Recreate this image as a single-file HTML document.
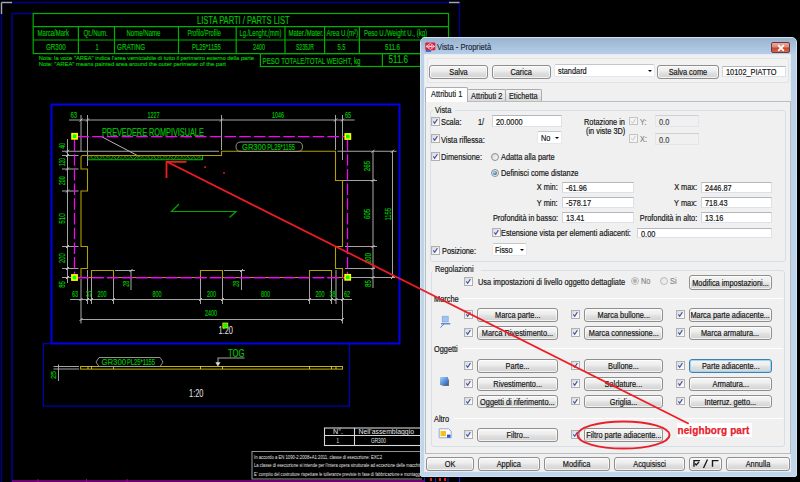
<!DOCTYPE html><html><head><meta charset="utf-8"><style>
*{margin:0;padding:0}
html,body{width:800px;height:482px;overflow:hidden;background:#000}
body{position:relative;font-family:"Liberation Sans",sans-serif;font-size:8.4px;color:#1a1a1a}
#cad{position:absolute;left:0;top:0}
#ovl{position:absolute;left:0;top:0}
.win{position:absolute;left:419.5px;top:36.5px;width:377px;height:440px;box-sizing:border-box;border:1px solid #d4e2ef;border-radius:5px 5px 2px 2px;
 background:linear-gradient(#b9d0e8,#bcd3ea 30%,#c0d6ec)}
.client{position:absolute;left:424px;top:54px;width:367px;height:418px;background:#f0f0f0;box-sizing:border-box;border:1px solid #e4ebf1}
.btn,.fld,.lbl,.cb,.rd,.tab,.grp,.sep,.panel,.tabpage{position:absolute;box-sizing:border-box;white-space:nowrap}
.btn{display:flex;justify-content:center;border:1px solid #8e8e8e;border-radius:3px;background:linear-gradient(#f6f6f6 0%,#ededed 42%,#e0e0e0 58%,#d2d2d2 100%);box-shadow:inset 0 0 0 1px rgba(255,255,255,.7);text-align:center;color:#141414}
.btn.focus{border-color:#3c7fb1;box-shadow:inset 0 0 0 1px #9fd5f5}
.fld{padding-top:1px;background:#fff;border:1px solid #dde2e8;border-top-color:#b4b8be;border-left-color:#d0d4da;padding-left:2.5px;color:#141414}
.fld.dis{background:#f0f0f0;border-color:#e2e5e9;border-top-color:#cdd0d4;color:#444}
.cmb{border-color:#e4e7eb;border-top-color:#c4c8cd;border-radius:2px}
.cmb .arr{position:absolute;right:2px;top:50%;margin-top:-1px;border-left:2.3px solid transparent;border-right:2.3px solid transparent;border-top:2.6px solid #000}
.lbl{height:12px;line-height:12px;color:#141414}
.t{display:inline-block;transform:scaleX(0.88);-webkit-text-stroke:.18px currentColor}
.cb{width:8.5px;height:8.5px;border:1px solid #b0b0b0;background:linear-gradient(135deg,#d8d8d8,#f6f6f6 70%,#fff)}
.cb svg{position:absolute;left:0;top:0}
.cb.dis{border-color:#c4c4c4;background:#f4f4f4}
.rd{width:8px;height:8px;border:1px solid #8e8f8f;border-radius:50%;background:linear-gradient(135deg,#d6d6d6,#fafafa)}
.rdot{position:absolute;left:1px;top:1px;width:4px;height:4px;border-radius:50%;background:radial-gradient(circle at 40% 35%,#a6e0ff,#1f6ea6 70%,#164a7a)}
.grp{border:1px solid #d5dfe5;border-radius:3px}
.glbl{position:absolute;background:#f0f0f0;padding:0 2px;height:12px;line-height:12px}
.sep{height:1px;background:#d5dfe5;border-bottom:1px solid #fff}
.panel{border:1px solid #e3e3e3;border-radius:2px;background:#f2f2f2}
.tabpage{border:1px solid #b9bcc0;background:#f0f0f0}
.tab{border:1px solid #a9adb3;border-bottom:none;background:linear-gradient(#f4f4f4,#e8e8e8 50%,#dadada);text-align:center;border-radius:2px 2px 0 0}
.tab.act{background:#fff;z-index:2}
</style></head><body>
<svg id="cad" width="800" height="482" viewBox="0 0 800 482" font-family="Liberation Sans, sans-serif"><line x1="1.5" y1="2.5" x2="459.5" y2="2.5" stroke="#000090" stroke-width="1.4"/><line x1="1.5" y1="2.5" x2="1.5" y2="482" stroke="#000090" stroke-width="1.4"/><line x1="459.5" y1="2.5" x2="459.5" y2="482" stroke="#000090" stroke-width="1.4"/><line x1="1.5" y1="2.5" x2="12" y2="2.5" stroke="#a8a8a8" stroke-width="1.4"/><line x1="1.5" y1="2.5" x2="1.5" y2="14" stroke="#a8a8a8" stroke-width="1.4"/><line x1="449" y1="2.5" x2="459.5" y2="2.5" stroke="#a8a8a8" stroke-width="1.4"/><line x1="12" y1="13.5" x2="33" y2="13.5" stroke="#0000a0" stroke-width="1.4"/><line x1="12" y1="13.5" x2="12" y2="482" stroke="#0000a0" stroke-width="1.4"/><line x1="12" y1="481" x2="424" y2="481" stroke="#900090" stroke-width="1.3"/><line x1="38" y1="479" x2="38" y2="482" stroke="#a000a0" stroke-width="1"/><line x1="86.5" y1="479" x2="86.5" y2="482" stroke="#a000a0" stroke-width="1"/><line x1="127" y1="479" x2="127" y2="482" stroke="#a000a0" stroke-width="1"/><rect x="33.2" y="13.5" width="415.3" height="40.1" stroke="#00b000" stroke-width="1.2" fill="none"/><line x1="33.2" y1="26.6" x2="448.5" y2="26.6" stroke="#00b000" stroke-width="1.2"/><line x1="33.2" y1="40" x2="448.5" y2="40" stroke="#00b000" stroke-width="1.2"/><line x1="78.4" y1="26.6" x2="78.4" y2="53.6" stroke="#00b000" stroke-width="1.2"/><line x1="114.5" y1="26.6" x2="114.5" y2="53.6" stroke="#00b000" stroke-width="1.2"/><line x1="178.5" y1="26.6" x2="178.5" y2="53.6" stroke="#00b000" stroke-width="1.2"/><line x1="236.2" y1="26.6" x2="236.2" y2="53.6" stroke="#00b000" stroke-width="1.2"/><line x1="285" y1="26.6" x2="285" y2="53.6" stroke="#00b000" stroke-width="1.2"/><line x1="324.6" y1="26.6" x2="324.6" y2="53.6" stroke="#00b000" stroke-width="1.2"/><line x1="359.4" y1="26.6" x2="359.4" y2="53.6" stroke="#00b000" stroke-width="1.2"/><text x="197" y="24.226" fill="#00c400" stroke="#00c400" stroke-width="0.18" font-size="11.18" textLength="92.60000000000002" lengthAdjust="spacingAndGlyphs" font-weight="normal" >LISTA PARTI / PARTS LIST</text><text x="37.4" y="36.372" fill="#00c400" stroke="#00c400" stroke-width="0.18" font-size="8.81" textLength="31.6" lengthAdjust="spacingAndGlyphs" font-weight="normal" >Marca/Mark</text><text x="83.4" y="36.372" fill="#00c400" stroke="#00c400" stroke-width="0.18" font-size="8.81" textLength="24.39999999999999" lengthAdjust="spacingAndGlyphs" font-weight="normal" >Qt./Num.</text><text x="126.5" y="36.372" fill="#00c400" stroke="#00c400" stroke-width="0.18" font-size="8.81" textLength="33.900000000000006" lengthAdjust="spacingAndGlyphs" font-weight="normal" >Nome/Name</text><text x="187.5" y="36.372" fill="#00c400" stroke="#00c400" stroke-width="0.18" font-size="8.81" textLength="33.30000000000001" lengthAdjust="spacingAndGlyphs" font-weight="normal" >Profilo/Profile</text><text x="239.5" y="36.372" fill="#00c400" stroke="#00c400" stroke-width="0.18" font-size="8.81" textLength="42.0" lengthAdjust="spacingAndGlyphs" font-weight="normal" >Lg./Lenght,(mm)</text><text x="288.4" y="36.372" fill="#00c400" stroke="#00c400" stroke-width="0.18" font-size="8.81" textLength="35.10000000000002" lengthAdjust="spacingAndGlyphs" font-weight="normal" >Mater./Mater.</text><text x="326.5" y="36.372" fill="#00c400" stroke="#00c400" stroke-width="0.18" font-size="8.81" textLength="31.5" lengthAdjust="spacingAndGlyphs" font-weight="normal" >Area U.(m²)</text><text x="364" y="36.372" fill="#00c400" stroke="#00c400" stroke-width="0.18" font-size="8.81" textLength="63" lengthAdjust="spacingAndGlyphs" font-weight="normal" >Peso U./Weight U., (kg)</text><text x="46" y="50.193999999999996" fill="#00c400" stroke="#00c400" stroke-width="0.18" font-size="9.15" textLength="19.599999999999994" lengthAdjust="spacingAndGlyphs" font-weight="normal" >GR300</text><text x="95.5" y="50.193999999999996" fill="#00c400" stroke="#00c400" stroke-width="0.18" font-size="9.15" textLength="3.0" lengthAdjust="spacingAndGlyphs" font-weight="normal" >1</text><text x="117" y="50.193999999999996" fill="#00c400" stroke="#00c400" stroke-width="0.18" font-size="9.15" textLength="28.19999999999999" lengthAdjust="spacingAndGlyphs" font-weight="normal" >GRATING</text><text x="192" y="50.193999999999996" fill="#00c400" stroke="#00c400" stroke-width="0.18" font-size="9.15" textLength="28.80000000000001" lengthAdjust="spacingAndGlyphs" font-weight="normal" >PL25*1155</text><text x="253" y="50.193999999999996" fill="#00c400" stroke="#00c400" stroke-width="0.18" font-size="9.15" textLength="12" lengthAdjust="spacingAndGlyphs" font-weight="normal" >2400</text><text x="296" y="50.193999999999996" fill="#00c400" stroke="#00c400" stroke-width="0.18" font-size="9.15" textLength="18" lengthAdjust="spacingAndGlyphs" font-weight="normal" >S235JR</text><text x="337.5" y="50.193999999999996" fill="#00c400" stroke="#00c400" stroke-width="0.18" font-size="9.15" textLength="8.0" lengthAdjust="spacingAndGlyphs" font-weight="normal" >5.5</text><text x="385" y="50.193999999999996" fill="#00c400" stroke="#00c400" stroke-width="0.18" font-size="9.15" textLength="15" lengthAdjust="spacingAndGlyphs" font-weight="normal" >511.6</text><text x="38.8" y="59.696" fill="#00c400" stroke="#00c400" stroke-width="0.18" font-size="6.10" textLength="215.2" lengthAdjust="spacingAndGlyphs" font-weight="normal" >Nota: la voce "AREA" indica l'area verniciabile di tutto il perimetro esterno della parte</text><text x="38.8" y="65.996" fill="#00c400" stroke="#00c400" stroke-width="0.18" font-size="6.10" textLength="187.2" lengthAdjust="spacingAndGlyphs" font-weight="normal" >Note: "AREA" means  painted area  around the outer perimeter of the part</text><rect x="260.4" y="53.6" width="188.10000000000002" height="12.899999999999999" stroke="#00b000" stroke-width="1.2" fill="none"/><line x1="382.4" y1="53.6" x2="382.4" y2="66.5" stroke="#00b000" stroke-width="1.2"/><text x="262.6" y="63.616" fill="#00c400" stroke="#00c400" stroke-width="0.18" font-size="9.49" textLength="97.79999999999995" lengthAdjust="spacingAndGlyphs" font-weight="normal" >PESO TOTALE/TOTAL WEIGHT, kg</text><text x="388.6" y="63.226" fill="#00c400" stroke="#00c400" stroke-width="0.18" font-size="11.18" textLength="19.399999999999977" lengthAdjust="spacingAndGlyphs" font-weight="normal" >511.6</text><rect x="51.5" y="104.5" width="348.0" height="239.0" stroke="#0000f0" stroke-width="2" fill="none"/><path d="M51.5 343.5 L43.4 343.5 L43.4 406.2 L349.5 406.2 L349.5 343.5" stroke="#0000b4" stroke-width="1.25" fill="none" /><line x1="69" y1="120" x2="354.5" y2="120" stroke="#a4a4a4" stroke-width="1.05"/><line x1="81" y1="115" x2="81" y2="152" stroke="#a4a4a4" stroke-width="1.05"/><line x1="87.5" y1="115" x2="87.5" y2="166" stroke="#a4a4a4" stroke-width="1.05"/><line x1="221.5" y1="115" x2="221.5" y2="150" stroke="#a4a4a4" stroke-width="1.05"/><line x1="335.5" y1="115" x2="335.5" y2="150" stroke="#a4a4a4" stroke-width="1.05"/><line x1="342.5" y1="115" x2="342.5" y2="160" stroke="#a4a4a4" stroke-width="1.05"/><line x1="62" y1="151.25" x2="219" y2="151.25" stroke="#a4a4a4" stroke-width="1.05"/><line x1="337.5" y1="151.25" x2="396.5" y2="151.25" stroke="#a4a4a4" stroke-width="1.05"/><line x1="62" y1="155.5" x2="78.5" y2="155.5" stroke="#a4a4a4" stroke-width="1.05"/><line x1="62" y1="169" x2="78.5" y2="169" stroke="#a4a4a4" stroke-width="1.05"/><line x1="62" y1="191" x2="78.5" y2="191" stroke="#a4a4a4" stroke-width="1.05"/><line x1="62" y1="246.5" x2="78.5" y2="246.5" stroke="#a4a4a4" stroke-width="1.05"/><line x1="62" y1="268.5" x2="78.5" y2="268.5" stroke="#a4a4a4" stroke-width="1.05"/><line x1="62" y1="277.5" x2="71" y2="277.5" stroke="#a4a4a4" stroke-width="1.05"/><line x1="67.5" y1="139" x2="67.5" y2="283" stroke="#a4a4a4" stroke-width="1.05"/><line x1="373" y1="151.25" x2="373" y2="288" stroke="#a4a4a4" stroke-width="1.05"/><line x1="392.5" y1="151.25" x2="392.5" y2="277.5" stroke="#a4a4a4" stroke-width="1.05"/><line x1="342.5" y1="180.5" x2="377" y2="180.5" stroke="#a4a4a4" stroke-width="1.05"/><line x1="345" y1="246.5" x2="377" y2="246.5" stroke="#a4a4a4" stroke-width="1.05"/><line x1="345" y1="268.5" x2="375" y2="268.5" stroke="#a4a4a4" stroke-width="1.05"/><line x1="351" y1="277.5" x2="395" y2="277.5" stroke="#a4a4a4" stroke-width="1.05"/><line x1="70" y1="299.5" x2="352" y2="299.5" stroke="#a4a4a4" stroke-width="1.05"/><line x1="81" y1="319.5" x2="342.5" y2="319.5" stroke="#a4a4a4" stroke-width="1.05"/><line x1="81" y1="279" x2="81" y2="323.5" stroke="#a4a4a4" stroke-width="1.05"/><line x1="342.5" y1="279" x2="342.5" y2="323.5" stroke="#a4a4a4" stroke-width="1.05"/><line x1="87.5" y1="270" x2="87.5" y2="304" stroke="#a4a4a4" stroke-width="1.05"/><line x1="91.5" y1="270" x2="91.5" y2="304" stroke="#a4a4a4" stroke-width="1.05"/><line x1="113.5" y1="270" x2="113.5" y2="304" stroke="#a4a4a4" stroke-width="1.05"/><line x1="200.5" y1="270" x2="200.5" y2="304" stroke="#a4a4a4" stroke-width="1.05"/><line x1="222.5" y1="270" x2="222.5" y2="304" stroke="#a4a4a4" stroke-width="1.05"/><line x1="309.5" y1="270" x2="309.5" y2="304" stroke="#a4a4a4" stroke-width="1.05"/><line x1="331.5" y1="270" x2="331.5" y2="304" stroke="#a4a4a4" stroke-width="1.05"/><line x1="336" y1="270" x2="336" y2="304" stroke="#a4a4a4" stroke-width="1.05"/><line x1="115" y1="270.5" x2="135" y2="270.5" stroke="#a4a4a4" stroke-width="1.05"/><line x1="131" y1="270.5" x2="131" y2="290" stroke="#a4a4a4" stroke-width="1.05"/><line x1="224" y1="270.5" x2="245" y2="270.5" stroke="#a4a4a4" stroke-width="1.05"/><line x1="241.5" y1="270.5" x2="241.5" y2="290" stroke="#a4a4a4" stroke-width="1.05"/><line x1="101.25" y1="136.5" x2="140" y2="156.9" stroke="#b4b4b4" stroke-width="1"/><line x1="79.5" y1="121.5" x2="82.5" y2="118.5" stroke="#d0d0d0" stroke-width="0.9"/><line x1="86.0" y1="121.5" x2="89.0" y2="118.5" stroke="#d0d0d0" stroke-width="0.9"/><line x1="220.0" y1="121.5" x2="223.0" y2="118.5" stroke="#d0d0d0" stroke-width="0.9"/><line x1="334.0" y1="121.5" x2="337.0" y2="118.5" stroke="#d0d0d0" stroke-width="0.9"/><line x1="341.0" y1="121.5" x2="344.0" y2="118.5" stroke="#d0d0d0" stroke-width="0.9"/><line x1="66.0" y1="152.75" x2="69.0" y2="149.75" stroke="#d0d0d0" stroke-width="0.9"/><line x1="66.0" y1="157.0" x2="69.0" y2="154.0" stroke="#d0d0d0" stroke-width="0.9"/><line x1="66.0" y1="170.5" x2="69.0" y2="167.5" stroke="#d0d0d0" stroke-width="0.9"/><line x1="66.0" y1="192.5" x2="69.0" y2="189.5" stroke="#d0d0d0" stroke-width="0.9"/><line x1="66.0" y1="248.0" x2="69.0" y2="245.0" stroke="#d0d0d0" stroke-width="0.9"/><line x1="66.0" y1="270.0" x2="69.0" y2="267.0" stroke="#d0d0d0" stroke-width="0.9"/><line x1="66.0" y1="279.0" x2="69.0" y2="276.0" stroke="#d0d0d0" stroke-width="0.9"/><line x1="371.5" y1="152.75" x2="374.5" y2="149.75" stroke="#d0d0d0" stroke-width="0.9"/><line x1="371.5" y1="182.0" x2="374.5" y2="179.0" stroke="#d0d0d0" stroke-width="0.9"/><line x1="371.5" y1="248.0" x2="374.5" y2="245.0" stroke="#d0d0d0" stroke-width="0.9"/><line x1="371.5" y1="270.0" x2="374.5" y2="267.0" stroke="#d0d0d0" stroke-width="0.9"/><line x1="371.5" y1="279.0" x2="374.5" y2="276.0" stroke="#d0d0d0" stroke-width="0.9"/><line x1="391.0" y1="152.75" x2="394.0" y2="149.75" stroke="#d0d0d0" stroke-width="0.9"/><line x1="391.0" y1="279.0" x2="394.0" y2="276.0" stroke="#d0d0d0" stroke-width="0.9"/><line x1="79.5" y1="301.0" x2="82.5" y2="298.0" stroke="#d0d0d0" stroke-width="0.9"/><line x1="86.0" y1="301.0" x2="89.0" y2="298.0" stroke="#d0d0d0" stroke-width="0.9"/><line x1="90.0" y1="301.0" x2="93.0" y2="298.0" stroke="#d0d0d0" stroke-width="0.9"/><line x1="112.0" y1="301.0" x2="115.0" y2="298.0" stroke="#d0d0d0" stroke-width="0.9"/><line x1="199.0" y1="301.0" x2="202.0" y2="298.0" stroke="#d0d0d0" stroke-width="0.9"/><line x1="221.0" y1="301.0" x2="224.0" y2="298.0" stroke="#d0d0d0" stroke-width="0.9"/><line x1="308.0" y1="301.0" x2="311.0" y2="298.0" stroke="#d0d0d0" stroke-width="0.9"/><line x1="330.0" y1="301.0" x2="333.0" y2="298.0" stroke="#d0d0d0" stroke-width="0.9"/><line x1="334.5" y1="301.0" x2="337.5" y2="298.0" stroke="#d0d0d0" stroke-width="0.9"/><line x1="341.0" y1="301.0" x2="344.0" y2="298.0" stroke="#d0d0d0" stroke-width="0.9"/><line x1="79.5" y1="321.0" x2="82.5" y2="318.0" stroke="#d0d0d0" stroke-width="0.9"/><line x1="341.0" y1="321.0" x2="344.0" y2="318.0" stroke="#d0d0d0" stroke-width="0.9"/><line x1="129.5" y1="272.0" x2="132.5" y2="269.0" stroke="#d0d0d0" stroke-width="0.9"/><line x1="240.0" y1="272.0" x2="243.0" y2="269.0" stroke="#d0d0d0" stroke-width="0.9"/><line x1="77.5" y1="136.5" x2="345" y2="136.5" stroke="#ff00ff" stroke-width="1.25" stroke-dasharray="11.5 3.2"/><line x1="77.5" y1="277.5" x2="345" y2="277.5" stroke="#ff00ff" stroke-width="1.25" stroke-dasharray="11.5 3.2"/><line x1="74.5" y1="139.5" x2="74.5" y2="274" stroke="#ff00ff" stroke-width="1.25" stroke-dasharray="11.5 3.2"/><line x1="347.5" y1="139.5" x2="347.5" y2="274" stroke="#ff00ff" stroke-width="1.25" stroke-dasharray="11.5 3.2"/><path d="M81 157.5 Q81 155.5 83 155.5 L221.5 155.5 L221.5 151.25 L335.5 151.25 L335.5 180.5 L342.5 180.5 L342.5 246.5 L335.5 246.5 L335.5 268.5 L342.5 268.5 L342.5 277.5 L331.5 277.5 L331.5 270.5 L309.5 270.5 L309.5 277.5 L222.5 277.5 L222.5 270.5 L200.5 270.5 L200.5 277.5 L113.5 277.5 L113.5 270.5 L91.5 270.5 L91.5 277.5 L81 277.5 L81 268.5 L87.5 268.5 L87.5 246.5 L81 246.5 L81 191 L87.5 191 L87.5 169 L81 169 Z" stroke="#b0a000" stroke-width="1.1" fill="none" stroke-linejoin="miter"/><line x1="77.5" y1="277.5" x2="345" y2="277.5" stroke="#ff00ff" stroke-width="1.25" stroke-dasharray="11.5 3.2"/><line x1="88" y1="156.3" x2="202.5" y2="156.3" stroke="#c05030" stroke-width="0.8" stroke-dasharray="1.5 1.5"/><path d="M88 159.5 L90.85 156.6 L93.70 159.5 L96.55 156.6 L99.40 159.5 L102.25 156.6 L105.10 159.5 L107.95 156.6 L110.80 159.5 L113.65 156.6 L116.50 159.5 L119.35 156.6 L122.20 159.5 L125.05 156.6 L127.90 159.5 L130.75 156.6 L133.60 159.5 L136.45 156.6 L139.30 159.5 L142.15 156.6 L145.00 159.5 L147.85 156.6 L150.70 159.5 L153.55 156.6 L156.40 159.5 L159.25 156.6 L162.10 159.5 L164.95 156.6 L167.80 159.5 L170.65 156.6 L173.50 159.5 L176.35 156.6 L179.20 159.5 L182.05 156.6 L184.90 159.5 L187.75 156.6 L190.60 159.5 L193.45 156.6 L196.30 159.5 L199.15 156.6 L202.00 159.5" stroke="#00b000" stroke-width="0.9" fill="none" clip-path="url(#hb)"/><path d="M88 156.6 L90.85 159.5 L93.70 156.6 L96.55 159.5 L99.40 156.6 L102.25 159.5 L105.10 156.6 L107.95 159.5 L110.80 156.6 L113.65 159.5 L116.50 156.6 L119.35 159.5 L122.20 156.6 L125.05 159.5 L127.90 156.6 L130.75 159.5 L133.60 156.6 L136.45 159.5 L139.30 156.6 L142.15 159.5 L145.00 156.6 L147.85 159.5 L150.70 156.6 L153.55 159.5 L156.40 156.6 L159.25 159.5 L162.10 156.6 L164.95 159.5 L167.80 156.6 L170.65 159.5 L173.50 156.6 L176.35 159.5 L179.20 156.6 L182.05 159.5 L184.90 156.6 L187.75 159.5 L190.60 156.6 L193.45 159.5 L196.30 156.6 L199.15 159.5 L202.00 156.6" stroke="#005800" stroke-width="0.6" fill="none" clip-path="url(#hb)"/><clipPath id="hb"><rect x="87.5" y="155" width="115" height="6"/></clipPath><line x1="88" y1="159.8" x2="202.5" y2="159.8" stroke="#00c000" stroke-width="1.1"/><line x1="202.5" y1="156" x2="202.5" y2="160" stroke="#00c000" stroke-width="1"/><rect x="72.0" y="133.70000000000002" width="5.2" height="5.2" stroke="#ffff00" stroke-width="1.6" fill="#00ff00"/><rect x="345.2" y="133.9" width="5.2" height="5.2" stroke="#ffff00" stroke-width="1.6" fill="#00ff00"/><rect x="71.9" y="274.9" width="5.2" height="5.2" stroke="#ffff00" stroke-width="1.6" fill="#00ff00"/><rect x="345.09999999999997" y="274.7" width="5.2" height="5.2" stroke="#ffff00" stroke-width="1.6" fill="#00ff00"/><text x="102" y="135.92600000000002" fill="#00c400" stroke="#00c400" stroke-width="0.18" font-size="11.18" textLength="101.75" lengthAdjust="spacingAndGlyphs" font-weight="normal" >PREVEDERE ROMPIVISUALE</text><text x="147.5" y="117.833" fill="#00c400" stroke="#00c400" stroke-width="0.18" font-size="8.98" textLength="12.0" lengthAdjust="spacingAndGlyphs" font-weight="normal" >1227</text><text x="272" y="117.533" fill="#00c400" stroke="#00c400" stroke-width="0.18" font-size="8.98" textLength="12" lengthAdjust="spacingAndGlyphs" font-weight="normal" >1046</text><text x="70.5" y="117.733" fill="#00c400" stroke="#00c400" stroke-width="0.18" font-size="8.98" textLength="6.5" lengthAdjust="spacingAndGlyphs" font-weight="normal" >63</text><text x="345" y="117.533" fill="#00c400" stroke="#00c400" stroke-width="0.18" font-size="8.98" textLength="6" lengthAdjust="spacingAndGlyphs" font-weight="normal" >65</text><text x="0" y="0" transform="translate(65.111,148.60000000000002) rotate(-90)" fill="#00c400" stroke="#00c400" stroke-width="0.18" font-size="8.64" textLength="5.600000000000023" lengthAdjust="spacingAndGlyphs">40</text><text x="0" y="0" transform="translate(65.111,166.0) rotate(-90)" fill="#00c400" stroke="#00c400" stroke-width="0.18" font-size="8.64" textLength="8.0" lengthAdjust="spacingAndGlyphs">120</text><text x="0" y="0" transform="translate(65.111,185.2) rotate(-90)" fill="#00c400" stroke="#00c400" stroke-width="0.18" font-size="8.64" textLength="9.0" lengthAdjust="spacingAndGlyphs">200</text><text x="0" y="0" transform="translate(65.111,223.85) rotate(-90)" fill="#00c400" stroke="#00c400" stroke-width="0.18" font-size="8.64" textLength="10.5" lengthAdjust="spacingAndGlyphs">510</text><text x="0" y="0" transform="translate(65.111,263.0) rotate(-90)" fill="#00c400" stroke="#00c400" stroke-width="0.18" font-size="8.64" textLength="9.600000000000023" lengthAdjust="spacingAndGlyphs">200</text><text x="0" y="0" transform="translate(65.111,287.85) rotate(-90)" fill="#00c400" stroke="#00c400" stroke-width="0.18" font-size="8.64" textLength="6.7000000000000455" lengthAdjust="spacingAndGlyphs">85</text><text x="0" y="0" transform="translate(370.311,171.2) rotate(-90)" fill="#00c400" stroke="#00c400" stroke-width="0.18" font-size="8.64" textLength="10.399999999999977" lengthAdjust="spacingAndGlyphs">265</text><text x="0" y="0" transform="translate(370.311,218.9) rotate(-90)" fill="#00c400" stroke="#00c400" stroke-width="0.18" font-size="8.64" textLength="10.0" lengthAdjust="spacingAndGlyphs">605</text><text x="0" y="0" transform="translate(370.611,263.0) rotate(-90)" fill="#00c400" stroke="#00c400" stroke-width="0.18" font-size="8.64" textLength="10.0" lengthAdjust="spacingAndGlyphs">200</text><text x="0" y="0" transform="translate(370.611,287.1) rotate(-90)" fill="#00c400" stroke="#00c400" stroke-width="0.18" font-size="8.64" textLength="7.0" lengthAdjust="spacingAndGlyphs">85</text><text x="0" y="0" transform="translate(390.811,220.55) rotate(-90)" fill="#00c400" stroke="#00c400" stroke-width="0.18" font-size="8.64" textLength="12.5" lengthAdjust="spacingAndGlyphs">1155</text><text x="0" y="0" transform="translate(128.911,286.7) rotate(-90)" fill="#00c400" stroke="#00c400" stroke-width="0.18" font-size="8.64" textLength="6.0" lengthAdjust="spacingAndGlyphs">28</text><text x="0" y="0" transform="translate(238.611,286.7) rotate(-90)" fill="#00c400" stroke="#00c400" stroke-width="0.18" font-size="8.64" textLength="6.0" lengthAdjust="spacingAndGlyphs">28</text><text x="72.0" y="296.894" fill="#00c400" stroke="#00c400" stroke-width="0.18" font-size="9.15" textLength="6.0" lengthAdjust="spacingAndGlyphs" font-weight="normal" >63</text><text x="86.0" y="296.894" fill="#00c400" stroke="#00c400" stroke-width="0.18" font-size="9.15" textLength="6.0" lengthAdjust="spacingAndGlyphs" font-weight="normal" >37</text><text x="97.5" y="296.894" fill="#00c400" stroke="#00c400" stroke-width="0.18" font-size="9.15" textLength="9.0" lengthAdjust="spacingAndGlyphs" font-weight="normal" >200</text><text x="152.5" y="296.894" fill="#00c400" stroke="#00c400" stroke-width="0.18" font-size="9.15" textLength="9.0" lengthAdjust="spacingAndGlyphs" font-weight="normal" >800</text><text x="207.0" y="296.894" fill="#00c400" stroke="#00c400" stroke-width="0.18" font-size="9.15" textLength="9.0" lengthAdjust="spacingAndGlyphs" font-weight="normal" >200</text><text x="261.0" y="296.894" fill="#00c400" stroke="#00c400" stroke-width="0.18" font-size="9.15" textLength="9.0" lengthAdjust="spacingAndGlyphs" font-weight="normal" >800</text><text x="315.5" y="296.894" fill="#00c400" stroke="#00c400" stroke-width="0.18" font-size="9.15" textLength="9.0" lengthAdjust="spacingAndGlyphs" font-weight="normal" >200</text><text x="329.5" y="296.894" fill="#00c400" stroke="#00c400" stroke-width="0.18" font-size="9.15" textLength="6.0" lengthAdjust="spacingAndGlyphs" font-weight="normal" >38</text><text x="344.0" y="296.894" fill="#00c400" stroke="#00c400" stroke-width="0.18" font-size="9.15" textLength="6.0" lengthAdjust="spacingAndGlyphs" font-weight="normal" >62</text><text x="205" y="316.372" fill="#00c400" stroke="#00c400" stroke-width="0.18" font-size="8.81" textLength="12" lengthAdjust="spacingAndGlyphs" font-weight="normal" >2400</text><text x="218.5" y="334.06" fill="#e6e6e6" stroke="#e6e6e6" stroke-width="0" font-size="10.17" textLength="14.5" lengthAdjust="spacingAndGlyphs" font-weight="normal" >1:20</text><rect x="222.8" y="323" width="5" height="5" stroke="#e0e000" stroke-width="0.8" fill="#00ff00"/><path d="M241 142 L298 142 Q302.5 142 302.5 146.75 Q302.5 151.5 298 151.5 L241 151.5 Q236 151.5 236 146.75 Q236 142 241 142 Z" stroke="#a0a0a0" stroke-width="0.9" fill="none" /><text x="242" y="149.977" fill="#00c400" stroke="#00c400" stroke-width="0.18" font-size="9.66" textLength="24" lengthAdjust="spacingAndGlyphs" font-weight="normal" >GR300</text><text x="267.3" y="149.989" fill="#00c400" stroke="#00c400" stroke-width="0.18" font-size="8.30" textLength="27.69999999999999" lengthAdjust="spacingAndGlyphs" font-weight="normal" >PL25*1155</text><path d="M179 204 L171.5 211.5 L236 211.5 L229.5 217.5" stroke="#00a800" stroke-width="1.2" fill="none" /><rect x="204.3" y="166.3" width="1.6" height="1.6" stroke="#ff2020" stroke-width="0" fill="#ff2020"/><rect x="223.2" y="172.2" width="1.6" height="1.6" stroke="#ff2020" stroke-width="0" fill="#ff2020"/><rect x="80.6" y="366.5" width="261.9" height="2.6" stroke="#c8b400" stroke-width="1" fill="none"/><line x1="200.5" y1="366.5" x2="200.5" y2="369" stroke="#e0e0e0" stroke-width="0.8"/><line x1="222.5" y1="366.5" x2="222.5" y2="369" stroke="#e0e0e0" stroke-width="0.8"/><line x1="309.5" y1="366.5" x2="309.5" y2="369" stroke="#e0e0e0" stroke-width="0.8"/><line x1="331.5" y1="366.5" x2="331.5" y2="369" stroke="#e0e0e0" stroke-width="0.8"/><line x1="336" y1="366.5" x2="336" y2="369" stroke="#e0e0e0" stroke-width="0.8"/><line x1="88" y1="366.5" x2="88" y2="369" stroke="#d0d0d0" stroke-width="0.8"/><line x1="91.5" y1="366.5" x2="91.5" y2="369" stroke="#d0d0d0" stroke-width="0.8"/><line x1="113.5" y1="366.5" x2="113.5" y2="369" stroke="#d0d0d0" stroke-width="0.8"/><line x1="53.5" y1="366.5" x2="79" y2="366.5" stroke="#a4a4a4" stroke-width="1"/><line x1="53.5" y1="369" x2="79" y2="369" stroke="#a4a4a4" stroke-width="1"/><line x1="58.5" y1="364.5" x2="58.5" y2="381" stroke="#a4a4a4" stroke-width="1"/><text x="0" y="0" transform="translate(55.806,379) rotate(-90)" fill="#00c400" stroke="#00c400" stroke-width="0.18" font-size="7.79" textLength="8" lengthAdjust="spacingAndGlyphs">25</text><path d="M99 357.5 L160 357.5 L163 362 L160 366.5 L99 366.5 L96 362 Z" stroke="#a0a0a0" stroke-width="0.9" fill="none" /><text x="101.5" y="365.216" fill="#00c400" stroke="#00c400" stroke-width="0.18" font-size="9.49" textLength="24.5" lengthAdjust="spacingAndGlyphs" font-weight="normal" >GR300</text><text x="127" y="365.228" fill="#00c400" stroke="#00c400" stroke-width="0.18" font-size="8.13" textLength="28" lengthAdjust="spacingAndGlyphs" font-weight="normal" >PL25*1155</text><text x="228" y="357.199" fill="#00c400" stroke="#00c400" stroke-width="0.18" font-size="10.00" textLength="16.5" lengthAdjust="spacingAndGlyphs" font-weight="normal" >TOG</text><line x1="217.5" y1="358" x2="244.5" y2="358" stroke="#a4a4a4" stroke-width="1"/><line x1="218" y1="358" x2="218" y2="363" stroke="#a4a4a4" stroke-width="1"/><path d="M215.8 362.5 L220 362.5 L217.9 366 Z" stroke="#e0e0e0" stroke-width="0.5" fill="#e0e0e0" /><text x="189" y="396.66" fill="#e6e6e6" stroke="#e6e6e6" stroke-width="0" font-size="10.17" textLength="14.5" lengthAdjust="spacingAndGlyphs" font-weight="normal" >1:20</text><rect x="324.5" y="428" width="115.5" height="17.5" stroke="#d8d8d8" stroke-width="1.1" fill="none"/><line x1="324.5" y1="435.5" x2="440" y2="435.5" stroke="#d8d8d8" stroke-width="1.1"/><line x1="354.5" y1="428" x2="354.5" y2="445.5" stroke="#d8d8d8" stroke-width="1.1"/><text x="333" y="434.318" fill="#e6e6e6" stroke="#e6e6e6" stroke-width="0" font-size="6.44" textLength="10" lengthAdjust="spacingAndGlyphs" font-weight="normal" >N°.</text><text x="358.5" y="434.379" fill="#e6e6e6" stroke="#e6e6e6" stroke-width="0" font-size="6.61" textLength="55.5" lengthAdjust="spacingAndGlyphs" font-weight="normal" >Nell'assemblaggio</text><text x="336.5" y="443.318" fill="#e6e6e6" stroke="#e6e6e6" stroke-width="0" font-size="6.44" textLength="2.5" lengthAdjust="spacingAndGlyphs" font-weight="normal" >1</text><text x="371" y="443.318" fill="#e6e6e6" stroke="#e6e6e6" stroke-width="0" font-size="6.44" textLength="15" lengthAdjust="spacingAndGlyphs" font-weight="normal" >GR300</text><path d="M440 451.5 L252 451.5 L252 479 L422 479" stroke="#909090" stroke-width="1.1" fill="none" /><text x="254" y="459.269" fill="#e6e6e6" stroke="#e6e6e6" stroke-width="0" font-size="4.91" textLength="128" lengthAdjust="spacingAndGlyphs" font-weight="normal" >In accordo a EN 1090-2:2008+A1:2011, classe di esecuzione: EXC2</text><text x="254" y="467.269" fill="#e6e6e6" stroke="#e6e6e6" stroke-width="0" font-size="4.91" textLength="170" lengthAdjust="spacingAndGlyphs" font-weight="normal" >La classe di esecuzione si intende per l'intera opera strutturale ad eccezione delle macchine</text><text x="254" y="475.769" fill="#e6e6e6" stroke="#e6e6e6" stroke-width="0" font-size="4.91" textLength="169" lengthAdjust="spacingAndGlyphs" font-weight="normal" >E' compito del costruttore rispettare le tolleranze previste in fase di fabbricazione e montaggio</text><line x1="424.5" y1="477.5" x2="424.5" y2="482" stroke="#2020c8" stroke-width="1"/><line x1="435.5" y1="477.5" x2="435.5" y2="482" stroke="#2020c8" stroke-width="1"/><line x1="448" y1="477.5" x2="448" y2="482" stroke="#2020c8" stroke-width="1"/><line x1="459.5" y1="477.5" x2="459.5" y2="482" stroke="#2020c8" stroke-width="1"/><rect x="430" y="478" width="2" height="3" stroke="#e02020" stroke-width="0" fill="#e02020"/><rect x="439" y="478" width="2" height="3" stroke="#e02020" stroke-width="0" fill="#e02020"/><rect x="444" y="478" width="2" height="3" stroke="#e02020" stroke-width="0" fill="#e02020"/></svg>
<div class="win"></div><div style="position:absolute;left:420.5px;top:38px;width:375px;height:16px;border-radius:4px 4px 0 0;background:linear-gradient(#9ab3cf,#a6bfdb 45%,#b6cee9)"></div><svg style="position:absolute;left:425px;top:42px" width="11" height="10" viewBox="0 0 11 10"><rect x="0.3" y="0.6" width="10" height="7.6" rx="1" fill="#d81e3c"/><path d="M1 4.4 L5.3 1.4 L9.6 4.4 L5.3 7.4 Z M3.2 2.9 L7.4 5.9 M7.4 2.9 L3.2 5.9 M1 4.4 H9.6" fill="none" stroke="#fbe6ea" stroke-width=".75"/><rect x="0.6" y="8.2" width="5.6" height="1.6" rx=".6" fill="#2f4fb0"/></svg><div class="lbl" style="left:437px;top:41px;font-size:8.6px;color:#1e2a3c"><span class="t" style="transform-origin:left center">Vista - Proprietà</span></div><div style="position:absolute;left:771px;top:42px;width:19px;height:11px;box-sizing:border-box;border:1px solid #6b3a3a;border-radius:2px;background:linear-gradient(#e9a99a 0%,#de8a78 45%,#c8452c 55%,#d2664c 100%)"><svg style="position:absolute;left:5px;top:1px" width="8" height="8" viewBox="0 0 8 8"><path d="M1.2 1.2 L6.8 6.8 M6.8 1.2 L1.2 6.8" stroke="#fff" stroke-width="1.8"/><path d="M1.2 1.2 L6.8 6.8 M6.8 1.2 L1.2 6.8" stroke="#f6f6f6" stroke-width="1.1"/></svg></div><div class="client"></div><div class="panel" style="left:427px;top:58px;width:362px;height:25px;"></div><div class="btn" style="left:429px;top:65px;width:59px;height:14px;line-height:13px;"><span class="t" style="transform-origin:center center">Salva</span></div><div class="btn" style="left:492px;top:65px;width:59px;height:14px;line-height:13px;"><span class="t" style="transform-origin:center center">Carica</span></div><div class="fld cmb" style="left:554px;top:64px;width:101px;height:13px;line-height:11px;"><span class="t" style="transform-origin:left center">standard</span><span class="arr"></span></div><div class="btn" style="left:657px;top:65px;width:62px;height:14px;line-height:13px;"><span class="t" style="transform-origin:center center">Salva come</span></div><div class="fld" style="left:722px;top:66px;width:64px;height:11px;line-height:9px;"><span class="t" style="transform-origin:left center">10102_PIATTO</span></div><div class="tabpage" style="left:425px;top:101px;width:366px;height:353px;"></div><div class="tab" style="left:467px;top:89px;width:39px;height:12px;line-height:12px"><span class="t" style="transform-origin:center">Attributi 2</span></div><div class="tab" style="left:505px;top:89px;width:37px;height:12px;line-height:12px"><span class="t" style="transform-origin:center">Etichetta</span></div><div class="tab act" style="left:425px;top:87px;width:43px;height:15px;line-height:13px"><span class="t" style="transform-origin:center">Attributi 1</span></div><div class="grp" style="left:430px;top:110px;width:356px;height:152px;"></div><div class="glbl" style="left:433px;top:104px"><span class="t" style="transform-origin:left center">Vista</span></div><div class="cb" style="left:431.2px;top:117.3px"><svg width="6.5" height="6.5" viewBox="0 0 7 7"><path d="M1.4 3.6 L2.9 5.6 L5.8 1.2" fill="none" stroke="#3f52a8" stroke-width="1.2"/></svg></div><div class="lbl" style="left:441px;top:116px;"><span class="t" style="transform-origin:left center">Scala:</span></div><div class="lbl" style="left:478px;top:116px;"><span class="t" style="transform-origin:left center">1/</span></div><div class="fld" style="left:492px;top:115px;width:70px;height:12px;line-height:10px;"><span class="t" style="transform-origin:left center">20.0000</span></div><div class="cb" style="left:431.2px;top:134.3px"><svg width="6.5" height="6.5" viewBox="0 0 7 7"><path d="M1.4 3.6 L2.9 5.6 L5.8 1.2" fill="none" stroke="#3f52a8" stroke-width="1.2"/></svg></div><div class="lbl" style="left:441px;top:133.5px;"><span class="t" style="transform-origin:left center">Vista riflessa:</span></div><div class="fld cmb" style="left:537px;top:131.3px;width:25.299999999999955px;height:12.5px;line-height:10.5px;"><span class="t" style="transform-origin:left center">No</span><span class="arr"></span></div><div class="cb" style="left:431.2px;top:152.3px"><svg width="6.5" height="6.5" viewBox="0 0 7 7"><path d="M1.4 3.6 L2.9 5.6 L5.8 1.2" fill="none" stroke="#3f52a8" stroke-width="1.2"/></svg></div><div class="lbl" style="left:441px;top:151px;"><span class="t" style="transform-origin:left center">Dimensione:</span></div><div class="rd" style="left:491px;top:153px;"></div><div class="lbl" style="left:501px;top:151px;"><span class="t" style="transform-origin:left center">Adatta alla parte</span></div><div class="rd" style="left:491px;top:168.5px;"><div class="rdot"></div></div><div class="lbl" style="left:501px;top:166.5px;"><span class="t" style="transform-origin:left center">Definisci come distanze</span></div><div class="lbl" style="left:584px;top:115.5px;"><span class="t" style="transform-origin:left center">Rotazione in</span></div><div class="lbl" style="left:586px;top:125px;"><span class="t" style="transform-origin:left center">(in viste 3D)</span></div><div class="cb dis" style="left:629.2px;top:116.8px"><svg width="6.5" height="6.5" viewBox="0 0 7 7"><path d="M1.4 3.6 L2.9 5.6 L5.8 1.2" fill="none" stroke="#c0c0c0" stroke-width="1"/></svg></div><div class="lbl" style="left:640px;top:115.5px;color:#8a8a8a"><span class="t" style="transform-origin:left center">Y:</span></div><div class="fld dis" style="left:655px;top:115px;width:44px;height:12px;line-height:10px;"><span class="t" style="transform-origin:left center">0.0</span></div><div class="cb dis" style="left:629.2px;top:134.3px"><svg width="6.5" height="6.5" viewBox="0 0 7 7"><path d="M1.4 3.6 L2.9 5.6 L5.8 1.2" fill="none" stroke="#c0c0c0" stroke-width="1"/></svg></div><div class="lbl" style="left:640px;top:133px;color:#8a8a8a"><span class="t" style="transform-origin:left center">X:</span></div><div class="fld dis" style="left:655px;top:133px;width:44px;height:12px;line-height:10px;"><span class="t" style="transform-origin:left center">0.0</span></div><div class="lbl" style="right:242px;top:181px;"><span class="t" style="transform-origin:right center">X min:</span></div><div class="fld" style="left:562px;top:182px;width:72px;height:11px;line-height:9px;"><span class="t" style="transform-origin:left center">-61.96</span></div><div class="lbl" style="right:242px;top:196.5px;"><span class="t" style="transform-origin:right center">Y min:</span></div><div class="fld" style="left:562px;top:197px;width:72px;height:11px;line-height:9px;"><span class="t" style="transform-origin:left center">-578.17</span></div><div class="lbl" style="right:242px;top:211.5px;"><span class="t" style="transform-origin:right center">Profondità in basso:</span></div><div class="fld" style="left:562px;top:212px;width:72px;height:11px;line-height:9px;"><span class="t" style="transform-origin:left center">13.41</span></div><div class="lbl" style="right:103px;top:181px;"><span class="t" style="transform-origin:right center">X max:</span></div><div class="fld" style="left:701px;top:182px;width:71px;height:11px;line-height:9px;"><span class="t" style="transform-origin:left center">2446.87</span></div><div class="lbl" style="right:103px;top:196.5px;"><span class="t" style="transform-origin:right center">Y max:</span></div><div class="fld" style="left:701px;top:197px;width:71px;height:11px;line-height:9px;"><span class="t" style="transform-origin:left center">718.43</span></div><div class="lbl" style="right:103px;top:211.5px;"><span class="t" style="transform-origin:right center">Profondità in alto:</span></div><div class="fld" style="left:701px;top:212px;width:71px;height:11px;line-height:9px;"><span class="t" style="transform-origin:left center">13.16</span></div><div class="cb" style="left:492.2px;top:228.3px"><svg width="6.5" height="6.5" viewBox="0 0 7 7"><path d="M1.4 3.6 L2.9 5.6 L5.8 1.2" fill="none" stroke="#3f52a8" stroke-width="1.2"/></svg></div><div class="lbl" style="left:501px;top:227px;"><span class="t" style="transform-origin:left center">Estensione vista per elementi adiacenti:</span></div><div class="fld" style="left:637px;top:228px;width:135px;height:10px;line-height:8px;"><span class="t" style="transform-origin:left center">0.00</span></div><div class="cb" style="left:431.2px;top:246.3px"><svg width="6.5" height="6.5" viewBox="0 0 7 7"><path d="M1.4 3.6 L2.9 5.6 L5.8 1.2" fill="none" stroke="#3f52a8" stroke-width="1.2"/></svg></div><div class="lbl" style="left:442px;top:245px;"><span class="t" style="transform-origin:left center">Posizione:</span></div><div class="fld cmb" style="left:491.6px;top:243.3px;width:35.89999999999998px;height:12.5px;line-height:10.5px;"><span class="t" style="transform-origin:left center">Fisso</span><span class="arr"></span></div><div class="grp" style="left:431px;top:270px;width:354px;height:177px;"></div><div class="glbl" style="left:433px;top:263px"><span class="t" style="transform-origin:left center">Regolazioni</span></div><div class="cb" style="left:464.2px;top:277.3px"><svg width="6.5" height="6.5" viewBox="0 0 7 7"><path d="M1.4 3.6 L2.9 5.6 L5.8 1.2" fill="none" stroke="#3f52a8" stroke-width="1.2"/></svg></div><div class="lbl" style="left:478px;top:276px;"><span class="t" style="transform-origin:left center">Usa impostazioni di livello oggetto dettagliate</span></div><div class="rd" style="left:631px;top:277px;opacity:.55;"></div><div class="lbl" style="left:641px;top:275px;color:#8a8a8a"><span class="t" style="transform-origin:left center">No</span></div><div style="position:absolute;left:633px;top:279px;width:4px;height:4px;border-radius:50%;background:#b0b0b0"></div><div class="rd" style="left:660px;top:277px;opacity:.55;"></div><div class="lbl" style="left:670px;top:275px;color:#8a8a8a"><span class="t" style="transform-origin:left center">Si</span></div><div class="btn" style="left:689px;top:275px;width:83px;height:15px;line-height:14px;"><span class="t" style="transform-origin:center center">Modifica impostazioni...</span></div><div class="sep" style="left:462px;top:298px;width:321px"></div><div class="lbl" style="left:434px;top:293px;"><span class="t" style="transform-origin:left center">Marche</span></div><div class="sep" style="left:462px;top:348px;width:321px"></div><div class="lbl" style="left:434px;top:343px;"><span class="t" style="transform-origin:left center">Oggetti</span></div><div class="sep" style="left:454px;top:417.5px;width:329px"></div><div class="lbl" style="left:434px;top:412.5px;"><span class="t" style="transform-origin:left center">Altro</span></div><div class="cb" style="left:464.2px;top:310.3px"><svg width="6.5" height="6.5" viewBox="0 0 7 7"><path d="M1.4 3.6 L2.9 5.6 L5.8 1.2" fill="none" stroke="#3f52a8" stroke-width="1.2"/></svg></div><div class="btn" style="left:477px;top:308px;width:81px;height:14px;line-height:13px;"><span class="t" style="transform-origin:center center">Marca parte...</span></div><div class="cb" style="left:571.2px;top:310.3px"><svg width="6.5" height="6.5" viewBox="0 0 7 7"><path d="M1.4 3.6 L2.9 5.6 L5.8 1.2" fill="none" stroke="#3f52a8" stroke-width="1.2"/></svg></div><div class="btn" style="left:584px;top:308px;width:79px;height:14px;line-height:13px;"><span class="t" style="transform-origin:center center">Marca bullone...</span></div><div class="cb" style="left:676.2px;top:310.3px"><svg width="6.5" height="6.5" viewBox="0 0 7 7"><path d="M1.4 3.6 L2.9 5.6 L5.8 1.2" fill="none" stroke="#3f52a8" stroke-width="1.2"/></svg></div><div class="btn" style="left:689px;top:308px;width:83px;height:14px;line-height:13px;"><span class="t" style="transform-origin:center center">Marca parte adiacente...</span></div><div class="cb" style="left:464.2px;top:328.3px"><svg width="6.5" height="6.5" viewBox="0 0 7 7"><path d="M1.4 3.6 L2.9 5.6 L5.8 1.2" fill="none" stroke="#3f52a8" stroke-width="1.2"/></svg></div><div class="btn" style="left:477px;top:326px;width:81px;height:14px;line-height:13px;"><span class="t" style="transform-origin:center center">Marca Rivestimento...</span></div><div class="cb" style="left:571.2px;top:328.3px"><svg width="6.5" height="6.5" viewBox="0 0 7 7"><path d="M1.4 3.6 L2.9 5.6 L5.8 1.2" fill="none" stroke="#3f52a8" stroke-width="1.2"/></svg></div><div class="btn" style="left:584px;top:326px;width:79px;height:14px;line-height:13px;"><span class="t" style="transform-origin:center center">Marca connessione...</span></div><div class="cb" style="left:676.2px;top:328.3px"><svg width="6.5" height="6.5" viewBox="0 0 7 7"><path d="M1.4 3.6 L2.9 5.6 L5.8 1.2" fill="none" stroke="#3f52a8" stroke-width="1.2"/></svg></div><div class="btn" style="left:689px;top:326px;width:83px;height:14px;line-height:13px;"><span class="t" style="transform-origin:center center">Marca armatura...</span></div><div class="cb" style="left:464.2px;top:361.3px"><svg width="6.5" height="6.5" viewBox="0 0 7 7"><path d="M1.4 3.6 L2.9 5.6 L5.8 1.2" fill="none" stroke="#3f52a8" stroke-width="1.2"/></svg></div><div class="btn" style="left:477px;top:359px;width:81px;height:14px;line-height:13px;"><span class="t" style="transform-origin:center center">Parte...</span></div><div class="cb" style="left:571.2px;top:361.3px"><svg width="6.5" height="6.5" viewBox="0 0 7 7"><path d="M1.4 3.6 L2.9 5.6 L5.8 1.2" fill="none" stroke="#3f52a8" stroke-width="1.2"/></svg></div><div class="btn" style="left:584px;top:359px;width:79px;height:14px;line-height:13px;"><span class="t" style="transform-origin:center center">Bullone...</span></div><div class="cb" style="left:676.2px;top:361.3px"><svg width="6.5" height="6.5" viewBox="0 0 7 7"><path d="M1.4 3.6 L2.9 5.6 L5.8 1.2" fill="none" stroke="#3f52a8" stroke-width="1.2"/></svg></div><div class="btn focus" style="left:689px;top:359px;width:83px;height:14px;line-height:13px;"><span class="t" style="transform-origin:center center">Parte adiacente...</span></div><div class="cb" style="left:464.2px;top:379.3px"><svg width="6.5" height="6.5" viewBox="0 0 7 7"><path d="M1.4 3.6 L2.9 5.6 L5.8 1.2" fill="none" stroke="#3f52a8" stroke-width="1.2"/></svg></div><div class="btn" style="left:477px;top:377px;width:81px;height:14px;line-height:13px;"><span class="t" style="transform-origin:center center">Rivestimento...</span></div><div class="cb" style="left:571.2px;top:379.3px"><svg width="6.5" height="6.5" viewBox="0 0 7 7"><path d="M1.4 3.6 L2.9 5.6 L5.8 1.2" fill="none" stroke="#3f52a8" stroke-width="1.2"/></svg></div><div class="btn" style="left:584px;top:377px;width:79px;height:14px;line-height:13px;"><span class="t" style="transform-origin:center center">Saldature...</span></div><div class="cb" style="left:676.2px;top:379.3px"><svg width="6.5" height="6.5" viewBox="0 0 7 7"><path d="M1.4 3.6 L2.9 5.6 L5.8 1.2" fill="none" stroke="#3f52a8" stroke-width="1.2"/></svg></div><div class="btn" style="left:689px;top:377px;width:83px;height:14px;line-height:13px;"><span class="t" style="transform-origin:center center">Armatura...</span></div><div class="cb" style="left:464.2px;top:396.8px"><svg width="6.5" height="6.5" viewBox="0 0 7 7"><path d="M1.4 3.6 L2.9 5.6 L5.8 1.2" fill="none" stroke="#3f52a8" stroke-width="1.2"/></svg></div><div class="btn" style="left:477px;top:395px;width:81px;height:13px;line-height:12px;"><span class="t" style="transform-origin:center center">Oggetti di riferimento...</span></div><div class="cb" style="left:571.2px;top:396.8px"><svg width="6.5" height="6.5" viewBox="0 0 7 7"><path d="M1.4 3.6 L2.9 5.6 L5.8 1.2" fill="none" stroke="#3f52a8" stroke-width="1.2"/></svg></div><div class="btn" style="left:584px;top:395px;width:79px;height:13px;line-height:12px;"><span class="t" style="transform-origin:center center">Griglia...</span></div><div class="cb" style="left:676.2px;top:396.8px"><svg width="6.5" height="6.5" viewBox="0 0 7 7"><path d="M1.4 3.6 L2.9 5.6 L5.8 1.2" fill="none" stroke="#3f52a8" stroke-width="1.2"/></svg></div><div class="btn" style="left:689px;top:395px;width:83px;height:13px;line-height:12px;"><span class="t" style="transform-origin:center center">Interruz. getto...</span></div><div class="cb" style="left:464.2px;top:430.3px"><svg width="6.5" height="6.5" viewBox="0 0 7 7"><path d="M1.4 3.6 L2.9 5.6 L5.8 1.2" fill="none" stroke="#3f52a8" stroke-width="1.2"/></svg></div><div class="btn" style="left:477px;top:428px;width:81px;height:14px;line-height:13px;"><span class="t" style="transform-origin:center center">Filtro...</span></div><div class="cb" style="left:571.2px;top:430.3px"><svg width="6.5" height="6.5" viewBox="0 0 7 7"><path d="M1.4 3.6 L2.9 5.6 L5.8 1.2" fill="none" stroke="#3f52a8" stroke-width="1.2"/></svg></div><div class="btn" style="left:584px;top:428px;width:79px;height:14px;line-height:13px;"><span class="t" style="transform-origin:center center">Filtro parte adiacente...</span></div><svg style="position:absolute;left:438px;top:314px" width="14" height="15" viewBox="0 0 14 15"><rect x="4.2" y="2.2" width="6" height="5.8" fill="#9cc4f0" stroke="#7b9fd8" stroke-width=".6"/><path d="M3 9.8 H12.3" stroke="#3b64c4" stroke-width="1.1"/><path d="M2.4 13.6 L6.2 10" stroke="#4a78d0" stroke-width=".9"/></svg><div style="position:absolute;left:440.3px;top:377px;width:8px;height:8px;background:linear-gradient(135deg,#a6d6f8,#5b93d8 55%,#2d5cb0);box-shadow:.8px .8px 1px #707070"></div><svg style="position:absolute;left:438px;top:427.5px" width="14" height="11" viewBox="0 0 14 11"><path d="M1.2 .8 H10.5 L13.2 3.2 V9.8 H1.2 Z" fill="#fff" stroke="#9aa6d4" stroke-width="1"/><rect x="2.5" y="3" width="5.5" height="5.2" fill="#f2c21a"/><rect x="9" y="6.6" width="3.5" height="3" fill="#1a5ad0"/></svg><div class="btn" style="left:426px;top:457px;width:48px;height:14px;line-height:13px;"><span class="t" style="transform-origin:center center">OK</span></div><div class="btn" style="left:478px;top:457px;width:62px;height:14px;line-height:13px;"><span class="t" style="transform-origin:center center">Applica</span></div><div class="btn" style="left:544px;top:457px;width:66px;height:14px;line-height:13px;"><span class="t" style="transform-origin:center center">Modifica</span></div><div class="btn" style="left:614px;top:457px;width:71px;height:14px;line-height:13px;"><span class="t" style="transform-origin:center center">Acquisisci</span></div><div class="btn" style="left:726px;top:457px;width:64px;height:14px;line-height:13px;"><span class="t" style="transform-origin:center center">Annulla</span></div><div class="btn" style="left:689px;top:457px;width:33px;height:14px"><svg style="position:absolute;left:-1px;top:-1px" width="33" height="14" viewBox="0 0 33 14"><path d="M5 9.8 V3.6 H11" fill="none" stroke="#1a1a1a" stroke-width="1.4"/><path d="M6 6.3 L7.2 8 L10 5" fill="none" stroke="#1a1a1a" stroke-width="1.3"/><path d="M18.5 2.5 L14.5 11" stroke="#111" stroke-width="1.3"/><path d="M23.5 9.8 V3.6 H29.5" fill="none" stroke="#1a1a1a" stroke-width="1.4"/></svg></div>
<div style="position:absolute;left:676.5px;top:423px;width:75px;height:13.5px;background:#fff"></div>
<div style="position:absolute;left:677.5px;top:424.5px;height:12px;line-height:12px;color:#e8202c;font-weight:bold;font-size:10px;letter-spacing:.1px;-webkit-text-stroke:.25px #e8202c;white-space:nowrap">neighborg part</div>
<svg id="ovl" width="800" height="482" viewBox="0 0 800 482"><line x1="688.75" y1="423.75" x2="166.5" y2="161.5" stroke="#f01c24" stroke-width="1.7"/><path d="M186.5 161.8 L166.5 161.8 L166.5 178" stroke="#f01c24" stroke-width="1.8" fill="none"/><ellipse cx="623.5" cy="435" rx="46" ry="13.6" fill="none" stroke="#e8202c" stroke-width="2"/></svg>
</body></html>
